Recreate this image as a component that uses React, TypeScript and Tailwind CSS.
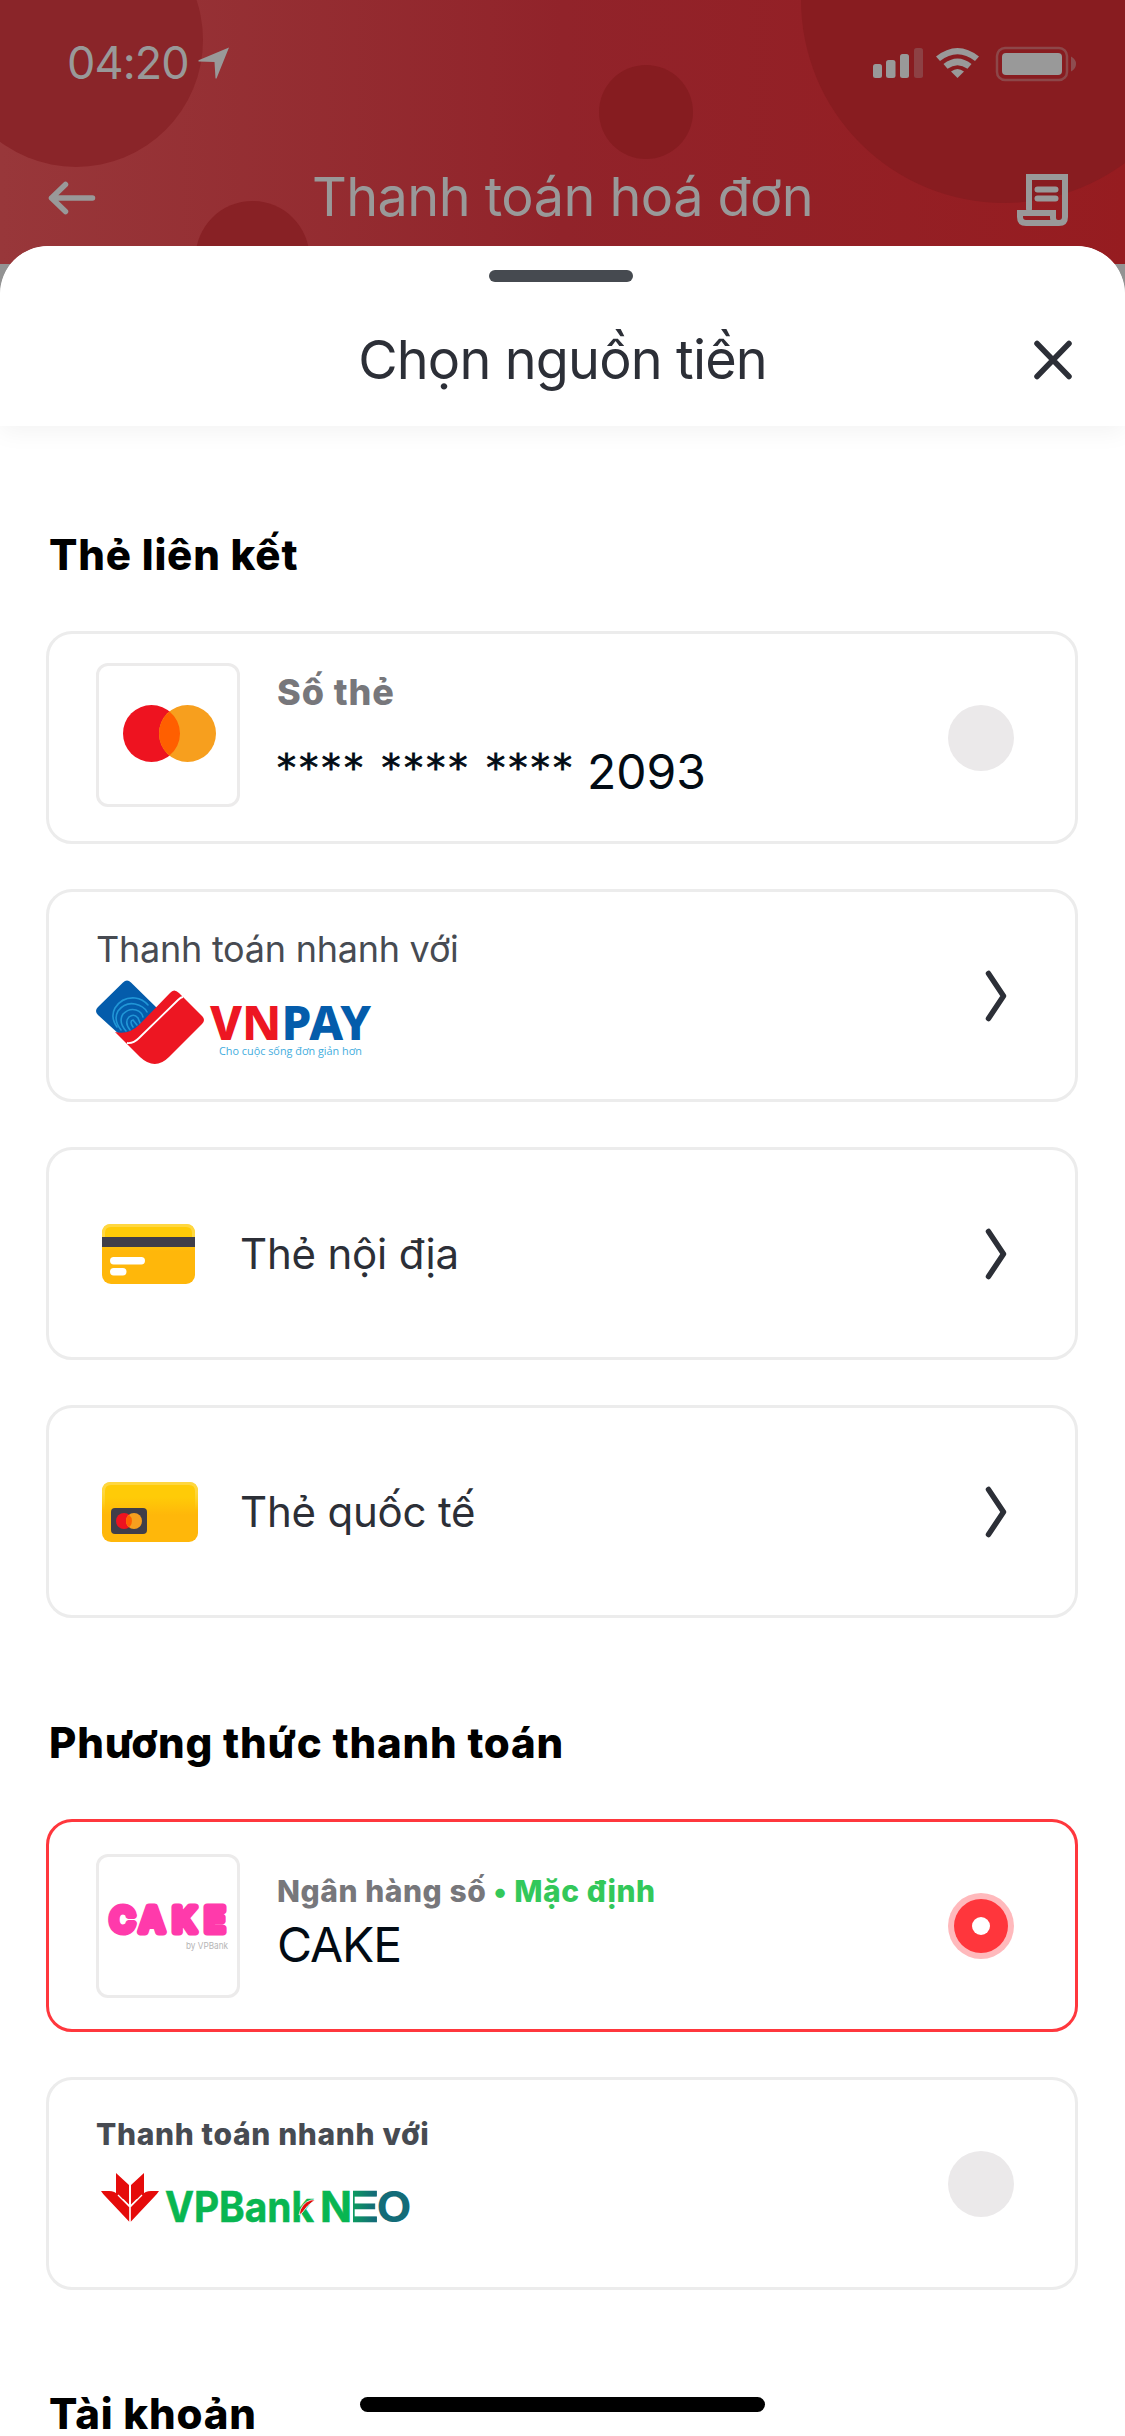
import type { ReactNode } from "react";
import clsx from "clsx";

function StatusBar() {
  return (
    <div className="flex h-[132px] items-start justify-between pl-[67px] pr-[48px] pt-[36px]">
      <div className="flex items-center gap-[10px]">
        <span className="w-[121px] whitespace-nowrap text-[45px] leading-[54px] tracking-[-0.9px]">04:20</span>
        <svg width="32" height="32" viewBox="0 0 32 32" fill="currentColor">
          <path d="M31 0.5 0.5 13.2v1.2l16 .6 1 16.5h1z" />
        </svg>
      </div>
      <svg width="204" height="36" viewBox="0 0 204 36" className="mt-[10px]" fill="currentColor">
        <rect x="0" y="18" width="9" height="14" rx="2.5" />
        <rect x="13" y="14" width="9.5" height="18" rx="2.5" />
        <rect x="27" y="8" width="9" height="24" rx="2.5" />
        <rect x="41" y="2" width="9" height="30" rx="2.5" opacity="0.3" />
        {/* wifi */}
        <path d="M63 10.5Q84.500-6.500 106 10.500L102 15Q84.500 1.500 67 15z" />
        <path d="M70.500 18Q84.500 7 98.500 18L94.500 22.800Q84.500 15.500 74.500 22.800z" />
        <path d="M78 25.500Q84.500 20.500 91 25.500L84.500 32z" />
        {/* battery */}
        <rect x="124" y="2" width="70" height="32" rx="8" fill="none" stroke="currentColor" strokeWidth="2.500" opacity="0.35" />
        <rect x="129" y="7" width="60" height="22" rx="4" />
        <path d="M198 10.500q5 2.500 5 7.500t-5 7.500z" opacity="0.4" />
      </svg>
    </div>
  );
}

function Header() {
  return (
    <header className="relative h-[264px] overflow-hidden bg-linear-to-r from-[#98373a] via-[#91232a] to-[#961c20] text-[#999999]">
      <svg className="absolute inset-0" width="1125" height="264" viewBox="0 0 1125 264">
        <circle cx="76" cy="40" r="127" fill="#8a2529" />
        <circle cx="252.500" cy="258" r="57" fill="#882125" />
        <circle cx="646" cy="112" r="47" fill="#861c20" />
        <circle cx="1004" cy="0" r="203" fill="#881c20" />
      </svg>
      <div className="relative">
        <StatusBar />
        <div className="flex h-[132px] items-center justify-between pl-[48px] pr-[57px]">
          <svg width="51" height="34" viewBox="0 0 51 34" fill="none" stroke="currentColor" strokeWidth="5.500" strokeLinecap="round" strokeLinejoin="round">
            <path d="M17.500 3.500 3.500 17l14 13.500M3.500 17h41" />
          </svg>
          <h1 className="-mt-[2px] ml-[9px] text-[54px] leading-[64px] tracking-[-0.55px]">Thanh toán hoá đơn</h1>
          <svg width="51" height="52" viewBox="0 0 51 52" className="mt-[4px]" fill="none" stroke="currentColor" strokeWidth="6" strokeLinecap="round" strokeLinejoin="miter">
            <path d="M12 35V3h36v40q0 6-6 6H9q-6 0-6-6v-4h33v5q0 5 5 5M20.500 15.500h18M20.500 24.500h18" />
          </svg>
        </div>
      </div>
    </header>
  );
}

function SheetHeader() {
  return (
    <div className="flex h-[180px] flex-col items-center rounded-t-[48px] bg-white pt-[24px] shadow-[0_6px_24px_rgba(0,0,0,0.05)]">
      <div className="mr-[3px] h-[12px] w-[144px] rounded-full bg-[#464a50]" />
      <div className="mt-[44px] grid w-full grid-cols-[96px_1fr_96px] items-center px-[5px] text-[#2c2f37]">
        <span />
        <h2 className="text-center text-[54px] leading-[68px] tracking-[-0.85px]">Chọn nguồn tiền</h2>
        <svg width="42" height="42" viewBox="0 0 42 42" className="ml-[8px]" fill="none" stroke="currentColor" strokeWidth="5.500" strokeLinecap="round">
          <path d="M5 4.500 37 37.500M37 4.500 5 37.500" />
        </svg>
      </div>
    </div>
  );
}

function SectionTitle({ children }: { children: ReactNode }) {
  return (
    <h3 className="ml-[3px] whitespace-nowrap text-[42px] font-extrabold leading-[60px] tracking-[0.8px] text-black">
      {children}
    </h3>
  );
}

function Card({ selected, children }: { selected?: boolean; children: ReactNode }) {
  return (
    <div
      className={clsx(
        "flex h-[213px] items-center justify-between rounded-[26px] border-[3px] bg-white pl-[47px]",
        selected ? "border-[#ff373d]" : "border-[#ececec]"
      )}
    >
      {children}
    </div>
  );
}

function Thumb({ children }: { children: ReactNode }) {
  return (
    <div className="flex size-[144px] shrink-0 items-center justify-center rounded-[12px] border-[3px] border-[#ecebeb]">
      {children}
    </div>
  );
}

function Radio({ checked }: { checked?: boolean }) {
  if (checked) {
    return (
      <div className="mr-[61px] flex size-[66px] items-center justify-center rounded-full bg-[#ffb9bc]">
        <div className="flex size-[54px] items-center justify-center rounded-full bg-[#ff363c]">
          <div className="size-[18px] rounded-full bg-white" />
        </div>
      </div>
    );
  }
  return <div className="mr-[61px] size-[66px] rounded-full bg-[#ebe9ea]" />;
}

function Chevron() {
  return (
    <svg width="26" height="54" viewBox="0 0 26 54" className="mr-[66px] mt-[1px]" fill="none" stroke="#2c2f37" strokeWidth="5.500" strokeLinecap="round" strokeLinejoin="round">
      <path d="M5.500 4.500 20.500 27 5.500 49.500" />
    </svg>
  );
}

function Mastercard() {
  return (
    <svg width="93" height="57" viewBox="0 0 93 57">
      <circle cx="28.500" cy="28.500" r="28.500" fill="#ee1320" />
      <circle cx="64.500" cy="28.500" r="28.500" fill="#f79f1e" />
      <path d="M46.500 6.400a28.500 28.500 0 0 1 0 44.200 28.500 28.500 0 0 1 0-44.200z" fill="#ff5f00" />
    </svg>
  );
}

function VnpayLogo() {
  return (
    <svg width="280" height="86" viewBox="0 0 280 86" overflow="visible">
      <path d="M27 2.500q4-4 8 0L62 29 40 55H24L2 35q-4-4 0-8z" fill="#045cab" />
      <g fill="none" stroke="#2196d6" strokeWidth="1.600" strokeLinecap="round">
        <path d="M21 47q-7-10-2-19 7-11 20-10 8 1 13 7" />
        <path d="M25 50q-8-10-3-19 7-9 17-7 9 2 12 8" />
        <path d="M30 51q-8-9-3-17 6-6 13-4 6 2 7 7" />
        <path d="M34 50q-6-8-1-13 5-4 9 1l2 5M37 47q-4-6 0-7l4 5" />
      </g>
      <path d="M74 13q4-5 9 0l23 23q4 4 0 8L73 77q-14 14-29 0L19 52q14 3 24-7z" fill="#ed1622" />
      <path d="M31 63q6 1 12-5l39-38q3-3 5-3" fill="none" stroke="#fff" strokeWidth="1.800" />
      <text x="114" y="59.500" textLength="161" lengthAdjust="spacingAndGlyphs" fontSize="48" fontWeight="800" fill="#ed1622" className="font-['Noto_Sans']">
        VN<tspan fill="#045cab">PAY</tspan>
      </text>
      <text x="123" y="74.500" textLength="143" lengthAdjust="spacingAndGlyphs" fontSize="11.500" fill="#3fadde" className="font-['Open_Sans']">Cho cuộc sống đơn giản hơn</text>
    </svg>
  );
}

function DomesticCardIcon() {
  return (
    <svg width="96" height="60" viewBox="0 0 96 60">
      <defs>
        <linearGradient id="domestic" x1="0" y1="0" x2="0" y2="1">
          <stop offset="0.300" stopColor="#ffcb07" />
          <stop offset="0.450" stopColor="#ffb70a" />
        </linearGradient>
      </defs>
      <rect width="93" height="60" rx="9" fill="url(#domestic)" />
      <path d="M1.500 13V9q0-7.500 7.500-7.500h75q7.500 0 7.500 7.500v4" fill="none" stroke="#ffd740" strokeWidth="3" />
      <rect y="13" width="93" height="10" fill="#403e49" />
      <rect x="8" y="33" width="35" height="7.500" rx="3.700" fill="#fff" />
      <rect x="8" y="44" width="16.500" height="7.500" rx="3.700" fill="#fff" />
    </svg>
  );
}

function InternationalCardIcon() {
  return (
    <svg width="96" height="60" viewBox="0 0 96 60">
      <defs>
        <linearGradient id="international" x1="0" y1="0" x2="0" y2="1">
          <stop offset="0.250" stopColor="#ffcb07" />
          <stop offset="0.550" stopColor="#ffb70a" />
        </linearGradient>
        <linearGradient id="edge" x1="0" y1="0" x2="0" y2="1">
          <stop offset="0.300" stopColor="#ffd740" />
          <stop offset="1" stopColor="#ffd740" stopOpacity="0" />
        </linearGradient>
      </defs>
      <rect width="96" height="60" rx="9" fill="url(#international)" />
      <path d="M1.500 28V9q0-7.500 7.500-7.500h78q7.500 0 7.500 7.500v19" fill="none" stroke="url(#edge)" strokeWidth="3" />
      <rect x="9" y="26" width="36" height="26" rx="4" fill="#403e49" />
      <circle cx="22" cy="39" r="8" fill="#ee1320" />
      <circle cx="32" cy="39" r="8" fill="#f79f1e" />
      <path d="M27 32.800a8 8 0 0 1 0 12.400 8 8 0 0 1 0-12.400z" fill="#ff5f00" />
    </svg>
  );
}

function CakeLogo() {
  return (
    <svg width="126" height="54" viewBox="0 0 126 54">
      <text
        x="5 34.500 67.500 99.500"
        y="32.500"
        fontSize="34"
        fontWeight="600"
        fill="#ff3aab"
        stroke="#ff3aab"
        strokeWidth="7"
        strokeLinejoin="round"
        className="font-['Inter']"
      >
        CAKE
      </text>
      <text x="81" y="49.500" textLength="42" lengthAdjust="spacingAndGlyphs" fontSize="9.500" fill="#b5b5b5" className="font-['Inter']">by VPBank</text>
    </svg>
  );
}

function VpbankNeoLogo() {
  return (
    <svg width="324" height="60" viewBox="0 0 324 60">
      <defs>
        <linearGradient id="neo" gradientUnits="userSpaceOnUse" x1="245" y1="0" x2="278" y2="0">
          <stop offset="0" stopColor="#08b651" />
          <stop offset="1" stopColor="#136c78" />
        </linearGradient>
        <clipPath id="neoBars">
          <rect x="257" y="15" width="26" height="37" />
        </clipPath>
      </defs>
      <g fill="#e50b0a">
        <path d="M20 1 33 13v21L20 22zM48 1 35 13v21l13-12z" />
        <path d="M5 19h8q6 0 9 4l11.500 12v15L9 24q-2-2-4-5zM63 19h-8q-6 0-9 4L34.500 35v15L59 24q2-2 4-5z" />
      </g>
      <path d="M34 12v38M27 27.500l7 7 7-7M22 23l12 12 12-12" fill="none" stroke="#fff" strokeWidth="1.300" />
      <g fontSize="42" fontWeight="700" className="font-['Inter']">
        <text x="69" y="50" textLength="149" lengthAdjust="spacingAndGlyphs" fill="#08b651" stroke="#08b651" strokeWidth="0.600">VPBank</text>
        <path d="M203 43q2-12 12-15h4q-8 5-13 13z" fill="#e50b0a" stroke="#fff" strokeWidth="0.800" />
        <text x="224" y="50" textLength="32" lengthAdjust="spacingAndGlyphs" fill="#08b651" stroke="#08b651" strokeWidth="0.600">N</text>
        <g clipPath="url(#neoBars)">
          <text x="244" y="50" textLength="40" lengthAdjust="spacingAndGlyphs" fill="url(#neo)" stroke="url(#neo)" strokeWidth="0.600">E</text>
        </g>
        <text x="280.500" y="50" textLength="35" lengthAdjust="spacingAndGlyphs" fill="#136c78">O</text>
      </g>
    </svg>
  );
}

export default function App() {
  return (
    <div className="relative h-[2436px] w-[1125px] overflow-hidden bg-[#939393] font-['Inter',sans-serif]">
      <Header />
      <main className="relative -mt-[18px] h-[2190px] overflow-hidden rounded-t-[48px] bg-white">
        <SheetHeader />

        <section className="pl-[46px] pr-[47px] pt-[99px]">
          <SectionTitle>Thẻ liên kết</SectionTitle>
          <div className="mt-[46px] flex flex-col gap-[45px]">
            <Card>
              <div className="-mt-[6px] flex gap-[37px]">
                <Thumb>
                  <div className="-mt-[3px] pl-[2px]">
                    <Mastercard />
                  </div>
                </Thumb>
                <div className="whitespace-nowrap">
                  <p className="mt-[6px] text-[36px] font-extrabold leading-[46px] tracking-[0.9px] text-[#77777b]">Số thẻ</p>
                  <p className="mt-[27px] flex text-[48px] leading-[60px] text-[#020b14]">
                    <span className="-mt-[4px] w-[310px] font-['DejaVu_Sans'] text-[38px] leading-[60px] tracking-[3.3px] [-webkit-text-stroke:0.8px_#020b14]">
                      **** **** ****
                    </span>
                    <span>2093</span>
                  </p>
                </div>
              </div>
              <Radio />
            </Card>
            <Card>
              <div className="mt-[1px]">
                <p className="text-[36px] leading-[46px] tracking-[-0.25px] text-[#474b52]">Thanh toán nhanh với</p>
                <div className="mt-[8px]">
                  <VnpayLogo />
                </div>
              </div>
              <Chevron />
            </Card>
            <Card>
              <div className="flex items-center gap-[42px] pl-[6px] text-[#2c2f37]">
                <DomesticCardIcon />
                <span className="text-[42px] leading-[60px] tracking-[-0.2px]">Thẻ nội địa</span>
              </div>
              <Chevron />
            </Card>
            <Card>
              <div className="flex items-center gap-[42px] pl-[6px] text-[#2c2f37]">
                <InternationalCardIcon />
                <span className="text-[42px] leading-[60px] tracking-[-0.2px]">Thẻ quốc tế</span>
              </div>
              <Chevron />
            </Card>
          </div>
        </section>

        <section className="pl-[46px] pr-[47px] pt-[95px]">
          <SectionTitle>Phương thức thanh toán</SectionTitle>
          <div className="mt-[46px] flex flex-col gap-[45px]">
            <Card selected>
              <div className="flex gap-[37px]">
                <Thumb>
                  <CakeLogo />
                </Thumb>
                <div className="whitespace-nowrap">
                  <p className="mt-[17px] text-[30px] font-extrabold leading-[40px] tracking-[0.55px] text-[#77777b]">
                    Ngân hàng số <span className="text-[#33c85a]">• Mặc định</span>
                  </p>
                  <p className="mt-[4px] text-[48px] leading-[60px] tracking-[-1.1px] text-[#020b14]">CAKE</p>
                </div>
              </div>
              <Radio checked />
            </Card>
            <Card>
              <div className="-mt-[21px]">
                <p className="text-[30px] font-extrabold leading-[40px] tracking-[0.65px] text-[#474b52]">Thanh toán nhanh với</p>
                <div className="mt-[18px]">
                  <VpbankNeoLogo />
                </div>
              </div>
              <Radio />
            </Card>
          </div>
        </section>

        <section className="pl-[46px] pr-[47px] pt-[94px]">
          <SectionTitle>Tài khoản</SectionTitle>
        </section>
      </main>

      {/* Home indicator */}
      <div className="absolute bottom-[24px] left-[360px] h-[15px] w-[405px] rounded-full bg-black" />
    </div>
  );
}
